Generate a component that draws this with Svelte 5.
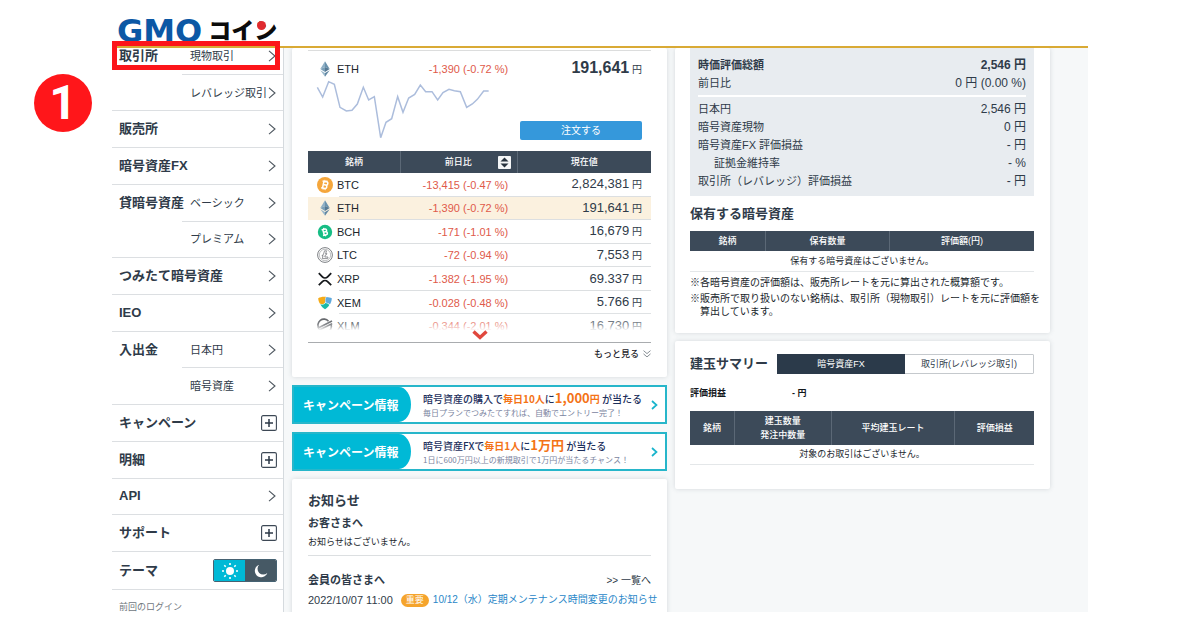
<script>
  const menu = [
    { label: '取引所', sub: '現物取引', open: true },
    { sub: 'レバレッジ取引' },
    { label: '販売所' },
    { label: '暗号資産FX' },
    { label: '貸暗号資産', sub: 'ベーシック', open: true },
    { sub: 'プレミアム' },
    { label: 'つみたて暗号資産' },
    { label: 'IEO' },
    { label: '入出金', sub: '日本円', open: true },
    { sub: '暗号資産' },
    { label: 'キャンペーン', expand: true },
    { label: '明細', expand: true },
    { label: 'API' },
    { label: 'サポート', expand: true }
  ];

  const coins = [
    { id: 'BTC', change: '-13,415 (-0.47 %)', price: '2,824,381' },
    { id: 'ETH', change: '-1,390 (-0.72 %)', price: '191,641' },
    { id: 'BCH', change: '-171 (-1.01 %)', price: '16,679' },
    { id: 'LTC', change: '-72 (-0.94 %)', price: '7,553' },
    { id: 'XRP', change: '-1.382 (-1.95 %)', price: '69.337' },
    { id: 'XEM', change: '-0.028 (-0.48 %)', price: '5.766' },
    { id: 'XLM', change: '-0.344 (-2.01 %)', price: '16.730' }
  ];

  const assets = [
    { name: '日本円', value: '2,546 円' },
    { name: '暗号資産現物', value: '0 円' },
    { name: '暗号資産FX 評価損益', value: '- 円' },
    { name: '証拠金維持率', value: '- %', indent: true },
    { name: '取引所（レバレッジ）評価損益', value: '- 円' }
  ];
</script>

{#snippet chevron()}
  <svg class="chev" width="8" height="12" viewBox="0 0 8 12" aria-hidden="true"><path d="M1 .8 7 6 1 11.2" fill="none" stroke="#4d565f" stroke-width="1.1" /></svg>
{/snippet}

{#snippet coin(id)}
  <svg class="coin" width="16" height="16" viewBox="0 0 16 16" aria-hidden="true">
    {#if id === 'BTC'}
      <circle cx="8" cy="8" r="8" fill="#f5a63b" />
      <g fill="none" stroke="#fff" stroke-width="1.5" transform="rotate(12 8 8)">
        <path d="M6.2 4.5v7M4.8 4.6h4a1.6 1.6 0 0 1 0 3.3H6.2M8.8 7.9a1.8 1.8 0 0 1 0 3.5h-4" />
        <path d="M7 3v1.6M9 3v1.6M7 11.4V13M9 11.4V13" stroke-width="1" />
      </g>
    {:else if id === 'ETH'}
      <path d="M8 .3 3.3 8 8 6z" fill="#8fb0c6" /><path d="M8 .3v5.700l4.700 2z" fill="#6a92ad" />
      <path d="M3.300 8 8 6v5z" fill="#7a9fb8" /><path d="M12.700 8 8 6v5z" fill="#547893" />
      <path d="M3.300 9.200 8 12v3.700z" fill="#9ab8cb" /><path d="M12.700 9.200 8 12v3.700z" fill="#6288a3" />
    {:else if id === 'BCH'}
      <circle cx="8" cy="8" r="7.2" fill="#17bd85" />
      <g fill="none" stroke="#fff" stroke-width="1.5" transform="rotate(-14 8 8)">
        <path d="M6.5 5v6M5.2 5.1h3.4a1.4 1.4 0 0 1 0 2.8H6.5M8.6 7.9a1.5 1.5 0 0 1 0 3H5.2" />
        <path d="M7.6 3.7v1.4M7.6 10.9v1.4" stroke-width="1.2" />
      </g>
    {:else if id === 'LTC'}
      <circle cx="8" cy="8" r="7.4" fill="#fff" stroke="#7c7f83" />
      <circle cx="8" cy="8" r="5.7" fill="none" stroke="#a3a5a8" stroke-width=".7" />
      <path d="M7.5 3.8h2L8.6 7l1.2-.5-.3 1.1-1.2.5-.5 1.9h3.2l-.4 1.6H5.3l.8-2.9-1 .4.3-1.1 1-.4z" fill="#fff" stroke="#77797d" stroke-width=".8" />
    {:else if id === 'XRP'}
      <g fill="none" stroke="#16191c" stroke-width="1.8">
        <path d="M1.800 2.200l3.600 3.600a3.700 3.700 0 0 0 5.200 0l3.600-3.600" />
        <path d="M1.800 14.200l3.600-3.600a3.700 3.700 0 0 1 5.200 0l3.600 3.600" />
      </g>
    {:else if id === 'XEM'}
      <path d="M1.200 3.200C3.400 1.900 6 1.400 9 1.800 7.500 4 8.600 5.600 8 7.600 6.800 10 4.200 9.400 2.800 8.400 1.800 6.800 1.300 5 1.200 3.200z" fill="#f5ab19" />
      <path d="M9.600 1.900c2 .1 3.800.5 5.200 1.300 0 2.300-.8 4.500-2 6.400-1.200-1.900-2.600-2-4.300-2.200.5-2-.9-3.300 1.100-5.500z" fill="#5fa9dd" />
      <path d="M3.300 9.300c2 1 4 .4 5-1.200 1.800.1 3 .4 3.900 2.200-1.100 1.700-2.600 3-4.200 4-1.900-1.100-3.600-2.800-4.700-5z" fill="#1bb9a8" />
    {:else}
      <g fill="none" stroke="#30343a" stroke-width="1.6">
        <path d="M2 10.500A6 6 0 0 1 11.500 3.200M14 6.500A6 6 0 0 1 4.500 13" />
        <path d="M.8 10.200 15 3M1 12.800 15.200 5.600" />
      </g>
    {/if}
  </svg>
{/snippet}

{#snippet arrow()}
  <svg class="go" width="7" height="10" viewBox="0 0 7 10" aria-hidden="true"><path d="M1 1l4.500 4L1 9" fill="none" stroke="#19b4cc" stroke-width="1.700" /></svg>
{/snippet}

<div class="page">
  <div class="screen">
    <header class="top">
      <a class="logo" href="#home" aria-label="GMOコイン"><span class="gmo">GMO</span><span class="kana">コイン</span></a>
    </header>

    <div class="body">
      <aside class="side">
        <nav class="menu">
          {#each menu as item}
            <div class="item">
              {#if item.sub}
                <span class="group" class:open={item.open}>{item.label ?? ''}</span>
                <a class="sub" href="#menu">{item.sub}{@render chevron()}</a>
              {:else if item.expand}
                <button class="main plusrow" type="button">{item.label}
                  <svg width="16" height="16" viewBox="0 0 16 16" aria-hidden="true"><rect x=".6" y=".6" width="14.800" height="14.800" rx="1.500" fill="#fff" stroke="#3d4855" stroke-width="1.100" /><path d="M4 8h8M8 4v8" stroke="#2c3947" stroke-width="1.500" /></svg>
                </button>
              {:else}
                <a class="main" href="#menu">{item.label}{@render chevron()}</a>
              {/if}
            </div>
          {/each}
        </nav>
        <div class="theme">
          <span>テーマ</span>
          <div class="toggle">
            <button type="button" class="light" aria-label="ライト">
              <svg width="18" height="18" viewBox="0 0 18 18" aria-hidden="true"><circle cx="9" cy="9" r="4" fill="#fff" /><path d="M9 1v2M9 15v2M1 9h2M15 9h2M3.300 3.300l1.400 1.400M13.300 13.300l1.400 1.400M3.300 14.700l1.400-1.400M13.300 4.700l1.400-1.400" stroke="#fff" stroke-width="1.600" /></svg>
            </button>
            <button type="button" class="dark" aria-label="ダーク">
              <svg width="14" height="14" viewBox="0 0 14 14" aria-hidden="true"><path d="M5.200.8A6.400 6.400 0 1 0 13.300 8.900 5.500 5.500 0 0 1 5.200.8z" fill="#fff" /></svg>
            </button>
          </div>
        </div>
        <p class="login">前回のログイン</p>
      </aside>

      <main class="content">
        <div class="col">
          <section class="card market">
            <div class="pick">
              <span class="name">{@render coin('ETH')}ETH</span>
              <span class="change">-1,390 (-0.72 %)</span>
              <span class="price"><b>191,641</b> 円</span>
            </div>
            <div class="trend">
              <svg width="174" height="60" viewBox="93 120 522 180" role="img" aria-label="ETH"><polyline points="97,142 113,171 131,125 148,133 165,202 184,213 201,211 217,192 235,142 251,180 268,170 287,293 303,247 320,236 338,170 354,217 371,174 389,163 406,135 422,155 441,155 458,180 474,158 492,148 508,152 526,155 545,202 562,192 577,178 596,153 611,153" fill="none" stroke="#acbddc" stroke-width="4.500" /></svg>
              <button class="order" type="button">注文する</button>
            </div>
            <div class="list">
              <table class="coins">
                <colgroup><col class="c1" /><col class="c2" /><col class="c3" /></colgroup>
                <thead>
                  <tr>
                    <th>銘柄</th>
                    <th><span class="sorted">前日比
                      <svg width="13" height="13" viewBox="0 0 13 13" aria-hidden="true"><rect width="13" height="13" rx="1" fill="#f4f6f7" /><path d="M2.500 5.500 6.500 1.500l4 4zM2.500 7.500h8l-4 4z" fill="#27323e" /></svg>
                    </span></th>
                    <th>現在値</th>
                  </tr>
                </thead>
                <tbody>
                  {#each coins as c}
                    <tr class:chosen={c.id === 'ETH'}>
                      <td><span class="name">{@render coin(c.id)}{c.id}</span></td>
                      <td class="change">{c.change}</td>
                      <td class="price"><span>{c.price}</span> 円</td>
                    </tr>
                  {/each}
                </tbody>
              </table>
              <div class="fade">
                <svg width="16" height="10" viewBox="0 0 16 10" aria-hidden="true"><path d="M1.500 1.500 8 7.500l6.500-6" fill="none" stroke="#e0483e" stroke-width="3.400" /></svg>
              </div>
            </div>
            <a class="more" href="#more">もっと見る
              <svg width="8" height="8" viewBox="0 0 8 8" aria-hidden="true"><path d="M.5.600 4 3.600 7.500.600M.5 3.900 4 6.900l3.500-3" fill="none" stroke="#7b8289" stroke-width=".9" /></svg>
            </a>
          </section>

          <a class="banner" href="#campaign1">
            <span class="tag">キャンペーン情報</span>
            <span class="copy">
              <span class="line">暗号資産の購入で<b>毎日10人</b>に<b><big>1,000</big>円</b> が当たる</span>
              <small>毎日プランでつみたてすれば、自動でエントリー完了！</small>
            </span>
            {@render arrow()}
          </a>
          <a class="banner" href="#campaign2">
            <span class="tag">キャンペーン情報</span>
            <span class="copy">
              <span class="line">暗号資産FXで<b>毎日1人</b>に<b><big>1万円</big></b> が当たる</span>
              <small>1日に600万円以上の新規取引で1万円が当たるチャンス！</small>
            </span>
            {@render arrow()}
          </a>

          <section class="card news">
            <h2>お知らせ</h2>
            <h3>お客さまへ</h3>
            <p class="none">お知らせはございません。</p>
            <div class="newshead">
              <h3>会員の皆さまへ</h3>
              <a href="#list">&gt;&gt; 一覧へ</a>
            </div>
            <p class="entry"><time>2022/10/07 11:00</time><span class="badge">重要</span><a href="#n1">10/12（水）定期メンテナンス時間変更のお知らせ</a></p>
          </section>
        </div>

        <div class="col">
          <section class="card holdings">
            <dl class="totals">
              <div class="strong"><dt>時価評価総額</dt><dd>2,546 円</dd></div>
              <div class="rule"><dt>前日比</dt><dd>0 円 (0.00 %)</dd></div>
              {#each assets as a}
                <div class:indent={a.indent}><dt>{a.name}</dt><dd>{a.value}</dd></div>
              {/each}
            </dl>
            <h2>保有する暗号資産</h2>
            <table class="plain hold">
              <colgroup><col class="h1" /><col class="h2" /><col /></colgroup>
              <thead><tr><th>銘柄</th><th>保有数量</th><th>評価額(円)</th></tr></thead>
              <tbody><tr><td colspan="3">保有する暗号資産はございません。</td></tr></tbody>
            </table>
            <p class="note">※各暗号資産の評価額は、販売所レートを元に算出された概算額です。</p>
            <p class="note">※販売所で取り扱いのない銘柄は、取引所（現物取引）レートを元に評価額を<br />算出しています。</p>
          </section>

          <section class="card summary">
            <div class="sumhead">
              <h2>建玉サマリー</h2>
              <div class="tabs">
                <button type="button" class="on">暗号資産FX</button>
                <button type="button">取引所(レバレッジ取引)</button>
              </div>
            </div>
            <p class="pl"><span>評価損益</span><span>- 円</span></p>
            <table class="plain pos">
              <colgroup><col class="p1" /><col class="p2" /><col class="p3" /><col /></colgroup>
              <thead><tr><th>銘柄</th><th>建玉数量<br />発注中数量</th><th>平均建玉レート</th><th>評価損益</th></tr></thead>
              <tbody><tr><td colspan="4">対象のお取引はございません。</td></tr></tbody>
            </table>
          </section>
        </div>
      </main>
    </div>
  </div>

  <div class="frame" aria-hidden="true"></div>
  <div class="step">1</div>
</div>

<style>
  :global(body) { margin: 0; background: #fff; }
  .page {
    position: relative;
    padding: 0 112px 18px;
    font: 11px/16px "Liberation Sans", "Noto Sans CJK JP", sans-serif;
    color: #2f3b49;
  }
  .page * { box-sizing: border-box; }
  h2, h3, p, dl, dd { margin: 0; }
  a { color: inherit; text-decoration: none; }
  button { font: inherit; color: inherit; border: 0; padding: 0; background: none; cursor: pointer; }
  svg { display: block; flex: none; }

  .screen { display: flex; flex-direction: column; height: calc(100vh - 18px); overflow: hidden; }
  .top { position: relative; z-index: 1; flex: none; height: 48px; padding: 16px 5px 0; background: #fff; border-bottom: 2px solid #d9aa35; }
  .logo { position: relative; display: inline-flex; align-items: flex-start; gap: 6px; height: 28px; }
  .gmo { font: bold 32px/30px "DejaVu Sans", sans-serif; color: #0c58a5; }
  .kana { font: 900 23px/26px "Noto Sans CJK JP", sans-serif; color: #0b0b0b; }
  .logo::after { content: ""; position: absolute; right: 11px; top: 5px; width: 9px; height: 9px; border-radius: 50%; background: #e02a2f; }

  .body { flex: 1; display: grid; grid-template-columns: 172px 1fr; min-height: 0; }
  .side { margin-top: -10px; border-right: 1px solid #d5dade; }
  .menu { display: grid; grid-auto-rows: 1fr; height: 514px; }
  .item { display: flex; align-items: stretch; min-height: 0; }
  .group, .main, .sub { display: flex; align-items: center; border-bottom: 1px solid #dcdfe2; white-space: nowrap; }
  .group { width: 70px; padding-left: 7px; font-size: 13px; font-weight: bold; }
  .group.open { border-bottom-color: transparent; }
  .main { flex: 1; justify-content: space-between; padding: 0 7px; font-size: 13px; font-weight: bold; }
  .plusrow { padding-right: 6px; }
  .sub { flex: 1; justify-content: space-between; padding: 0 7px 0 8px; }
  .theme { display: flex; align-items: center; justify-content: space-between; height: 38px; padding: 0 6px 0 7px; border-bottom: 1px solid #dcdfe2; font-size: 13px; font-weight: bold; }
  .toggle { display: flex; width: 64px; height: 23px; border-radius: 2px; overflow: hidden; border: 1px solid #466272; }
  .toggle button { flex: 1; display: grid; place-items: center; }
  .light { background: #00b9d6; }
  .toggle .dark { background: #465965; }
  .login { padding: 9px 7px 0; font-size: 9px; color: #70777e; }

  .content { display: grid; grid-template-columns: minmax(0, 1fr) minmax(0, 1fr); gap: 8px; align-items: start; padding: 0 38px 0 8px; background: #f6f8f9; min-height: 0; }
  .col { display: flex; flex-direction: column; gap: 8px; }
  .card { padding: 16px; background: #fff; border-radius: 2px; box-shadow: 0 0 5px rgba(60, 75, 90, .18); }
  h2 { font-size: 13px; line-height: 20px; }
  h3 { font-size: 11px; line-height: 16px; }

  .market { padding: 2px 16px 15px; }
  .pick { display: grid; grid-template-columns: 27fr 34fr 39fr; align-items: center; height: 30px; padding-top: 6px; border-top: 1px solid #dcdddd; }
  .name { display: flex; align-items: center; gap: 4px; padding-left: 9px; color: #20262c; }
  .change { padding-right: 9px; text-align: right; color: #e05a4a; white-space: nowrap; }
  .price { padding-right: 9px; text-align: right; font-size: 10px; white-space: nowrap; }
  .price span { font-size: 13px; }
  .price b { font-size: 16px; }
  .trend { display: flex; align-items: flex-end; justify-content: space-between; padding: 0 9px 11px 8px; }
  .order { width: 122px; height: 19px; border-radius: 2px; background: #3598db; color: #fff; font-size: 10px; line-height: 18px; }
  .list { position: relative; height: 192px; border-bottom: 1px solid #a9acaf; }
  .fade { position: absolute; inset: auto 0 0; display: flex; align-items: flex-end; justify-content: center; height: 32px; padding-bottom: 2px; background: linear-gradient(rgba(255, 255, 255, 0), rgba(255, 255, 255, .4) 45%, #fff 64%); }
  table { width: 100%; border-collapse: collapse; border-spacing: 0; table-layout: fixed; }
  th { padding: 0; background: #3c4a59; color: #fff; font-size: 9px; font-weight: 500; line-height: 14px; border-right: 1px solid #5b6876; }
  th:last-child { border-right: 0; }
  td { padding: 0; }
  .coins { height: 187px; }
  .c1 { width: 27%; }
  .c2 { width: 34%; }
  .coins th { height: 22px; }
  .sorted { display: flex; align-items: center; justify-content: flex-end; gap: 26px; padding-right: 6px; }
  .coins td { background: linear-gradient(#dcdfe1, #dcdfe1) 0 100% / 100% 1px no-repeat; }
  .coins td.change { padding-right: 9px; }
  .coins td.price { padding-right: 9px; }
  .coins td:first-child { background-position: 31px 100%; }
  .chosen { background: #fbf1df; }
  .more { display: flex; align-items: center; justify-content: flex-end; gap: 4px; padding-top: 3px; font-size: 9px; font-weight: 500; color: #1f252b; }

  .banner { display: flex; align-items: center; height: 39px; padding-right: 7px; border: 2px solid #27b6ca; background: #fff; color: #1c2f5c; overflow: hidden; font-family: "Noto Sans CJK JP", sans-serif; }
  .tag { align-self: stretch; display: flex; align-items: center; width: 117px; padding-left: 9px; border-radius: 0 12px 12px 0 / 0 50% 50% 0; background: #00b9d6; color: #fff; font-size: 12px; font-weight: bold; white-space: nowrap; }
  .copy { flex: 1; padding-left: 12px; white-space: nowrap; }
  .line { display: block; font-size: 10px; line-height: 16px; font-weight: 500; }
  .line b { color: #f47316; }
  .line big { font-size: 13px; line-height: 14px; }
  small { display: block; font-size: 8px; line-height: 12px; color: #7b84a0; }

  .news { padding-top: 12px; }
  .news h3 { margin-top: 4px; }
  .none { padding: 3px 0 5px; border-bottom: 1px solid #dcdfe1; font-size: 9px; color: #20262c; }
  .newshead { display: flex; align-items: flex-end; justify-content: space-between; margin-top: 12px; }
  .newshead a { font-size: 10px; line-height: 14px; }
  .entry { display: flex; align-items: center; padding-top: 4px; white-space: nowrap; }
  .badge { margin: 0 4px 0 8px; padding: 0 5px; border-radius: 7px; background: #f5a42c; color: #fff; font-size: 9px; line-height: 13px; }
  .entry a { color: #2a87c8; font-size: 10px; }

  .holdings { padding: 0 16px 15px 15px; }
  .totals { padding: 8px 8px 6px; background: #e8ecf0; line-height: 18px; }
  .totals div { display: flex; justify-content: space-between; }
  .totals dd { font-size: 12px; }
  .totals .strong { font-weight: bold; }
  .totals .rule { margin-bottom: 3px; padding-bottom: 3px; border-bottom: 2px solid #fff; }
  .totals .indent dt { padding-left: 16px; }
  .holdings h2 { margin: 8px 0 7px; }
  .plain td { height: 20px; text-align: center; font-size: 9px; line-height: 16px; color: #20262c; border-bottom: 1px solid #e4e7e9; }
  .hold th { height: 20px; }
  .h1 { width: 22%; }
  .h2 { width: 36%; }
  .note { margin-top: 3px; padding-left: 10px; text-indent: -10px; font-size: 10px; line-height: 13px; color: #20262c; white-space: nowrap; }
  .hold + .note { margin-top: 4px; }

  .summary { padding: 13px 16px 24px 15px; }
  .sumhead { display: flex; align-items: center; justify-content: space-between; }
  .tabs { display: flex; width: 257px; height: 20px; border: 1px solid #c5c9cd; border-radius: 1px; }
  .tabs button { flex: 1; font-size: 9px; line-height: 16px; white-space: nowrap; }
  .tabs .on { margin: -1px 0 -1px -1px; background: #2b3a4a; color: #fff; }
  .pl { display: flex; gap: 66px; margin: 11px 0 10px; font-size: 9px; font-weight: bold; color: #14181c; }
  .pos th { height: 34px; }
  .p1 { width: 13%; }
  .p2 { width: 28%; }
  .p3 { width: 36%; }

  .frame { position: absolute; z-index: 2; left: 112px; top: 41px; width: 168px; height: 29px; border: 5px solid #fc151a; }
  .step { position: absolute; left: 34px; top: 74px; width: 58px; height: 58px; border-radius: 50%; background: #ff161a; color: #fff; text-align: center; font: bold 48px/58px Roboto, sans-serif; }
</style>
